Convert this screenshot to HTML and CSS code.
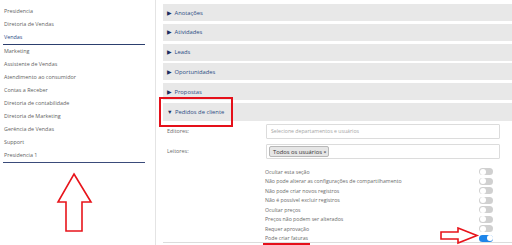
FILE: index.html
```html
<!DOCTYPE html>
<html lang="pt">
<head>
    <meta charset="UTF-8">
    <title>Permissões</title>
    <link rel="stylesheet" href="styles.css">
</head>
<body>
    <div class="page">
        <div class="sidebar">
            <div class="dept">Presidencia</div>
            <div class="dept">Diretoria de Vendas</div>
            <div class="dept selected">Vendas</div>
            <div class="dept">Marketing</div>
            <div class="dept">Assistente de Vendas</div>
            <div class="dept">Atendimento ao consumidor</div>
            <div class="dept">Contas a Receber</div>
            <div class="dept">Diretoria de contabilidade</div>
            <div class="dept">Diretoria de Marketing</div>
            <div class="dept">Gerência de Vendas</div>
            <div class="dept">Support</div>
            <div class="dept editing">Presidencia 1</div>

            <svg class="arrow-up" width="40" height="64" viewBox="0 0 40 64">
                <polygon points="18,2 35,30 26,30 26,59 10,59 10,30 2,30" fill="#fff" stroke="#e8141b" stroke-width="1.6" stroke-linejoin="miter"/>
            </svg>
        </div>

        <div class="main">
            <div class="bar"><span class="caret">&#9654;</span>Anotações</div>
            <div class="bar"><span class="caret">&#9654;</span>Atividades</div>
            <div class="bar"><span class="caret">&#9654;</span>Leads</div>
            <div class="bar"><span class="caret">&#9654;</span>Oportunidades</div>
            <div class="bar"><span class="caret">&#9654;</span>Propostas</div>
            <div class="bar open"><span class="caret">&#9660;</span>Pedidos de cliente<span class="mark-box"></span></div>

            <div class="section">
                <div class="field">
                    <label>Editores:</label>
                    <div class="input placeholder">Selecione departamentos e usuários</div>
                </div>
                <div class="field">
                    <label>Leitores:</label>
                    <div class="input"><span class="chip">Todos os usuários <b>&times;</b></span></div>
                </div>

                <div class="options">
                    <div class="option"><span>Ocultar esta seção</span><i class="toggle"></i></div>
                    <div class="option"><span>Não pode alterar as configurações de compartilhamento</span><i class="toggle"></i></div>
                    <div class="option"><span>Não pode criar novos registros</span><i class="toggle"></i></div>
                    <div class="option"><span>Não é possível excluir registros</span><i class="toggle"></i></div>
                    <div class="option"><span>Ocultar preços</span><i class="toggle"></i></div>
                    <div class="option"><span>Preços não podem ser alterados</span><i class="toggle"></i></div>
                    <div class="option"><span>Requer aprovação</span><i class="toggle"></i></div>
                    <div class="option"><span class="underlined">Pode criar faturas</span><i class="toggle on"></i></div>
                </div>

                <svg class="arrow-right" width="40" height="18" viewBox="0 0 40 18">
                    <polygon points="1,5 18,5 18,1 37,8.5 18,16 18,12 1,12" fill="#fff" stroke="#e8141b" stroke-width="1.6"/>
                </svg>
            </div>
        </div>
    </div>
</body>
</html>
```

FILE: styles.css
```css
*{
    box-sizing: border-box;
    font-family: 'Open Sans', sans-serif;
}
body{
    margin: 0;
    padding: 0;
    background: #fff;
    width: 512px;
    height: 245px;
    overflow: hidden;
}

.page{
    display: flex;
    height: 245px;
}

/* left list of departments */
.sidebar{
    position: relative;
    width: 156px;
    flex: none;
    border-right: 1px solid #e4e4e4;
    padding-top: 4.5px;
}
.dept{
    height: 13px;
    line-height: 13px;
    padding-left: 4px;
    margin-right: 10px;
    font-size: 5.4px;
    color: #5f5f5f;
    white-space: nowrap;
}
.dept.selected{
    color: #2b4a86;
    border-bottom: 1.5px solid #2c3f6e;
    margin-left: 3px;
    padding-left: 1px;
    height: 14px;
}
.dept.editing{
    border-bottom: 1.5px solid #3a4b7a;
    margin-left: 3px;
    padding-left: 1px;
    height: 14px;
}

.arrow-up{
    position: absolute;
    left: 56px;
    top: 172px;
}

/* right side */
.main{
    flex: 1;
    padding: 4px 0 0 7px;
    position: relative;
}
.bar{
    position: relative;
    height: 17px;
    margin-bottom: 2.8px;
    background: #e8e8e8;
    display: flex;
    align-items: center;
    padding-left: 4px;
    font-size: 5.8px;
    color: #2a4a82;
}
.bar.open{
    height: 18px;
    margin-bottom: 0;
}
.caret{
    font-size: 5.6px;
    color: #1a2f60;
    margin-right: 2.5px;
}
.mark-box{
    position: absolute;
    left: -4px;
    top: -6px;
    width: 74px;
    height: 30px;
    border: 2px solid #e5101a;
}

.section{
    position: relative;
    padding: 3px 12px 0 4px;
    height: 122px;
    border-bottom: 1px solid #dcdcdc;
}
.field{
    display: flex;
    align-items: center;
    margin-bottom: 5px;
}
.field label{
    width: 99px;
    flex: none;
    font-size: 5.4px;
    color: #6a6a6a;
}
.input{
    flex: 1;
    height: 15px;
    border: 1px solid #dcdcdc;
    border-radius: 1px;
    display: flex;
    align-items: center;
    padding-left: 2px;
    font-size: 5.2px;
}
.placeholder{
    color: #a5a5a5;
    padding-left: 4px;
}
.chip{
    height: 11px;
    line-height: 10px;
    padding: 0 2px 0 3px;
    background: #e6e6e6;
    border: 1px solid #b8b8b8;
    border-radius: 2px;
    color: #333;
    font-size: 5.8px;
}
.chip b{
    font-size: 5px;
    color: #555;
}

.options{
    margin-left: 98px;
    margin-right: 7px;
    padding-top: 3px;
}
.option{
    height: 9.5px;
    display: flex;
    align-items: center;
    justify-content: space-between;
    font-size: 5.2px;
    color: #6a6a6a;
}
.underlined{
    position: relative;
}
.underlined::after{
    content: "";
    position: absolute;
    left: -2px;
    right: -2px;
    bottom: -2.5px;
    height: 1.5px;
    background: #e5101a;
}
.toggle{
    width: 14px;
    height: 7px;
    border-radius: 4px;
    background: #d0d0d0;
    position: relative;
}
.toggle::after{
    content: "";
    position: absolute;
    left: 0.5px;
    top: 0.5px;
    width: 6px;
    height: 6px;
    border-radius: 50%;
    background: #fff;
}
.toggle.on{
    background: #1e85ea;
}
.toggle.on::after{
    left: 7.5px;
}

.arrow-right{
    position: absolute;
    left: 277px;
    top: 106px;
}
```
